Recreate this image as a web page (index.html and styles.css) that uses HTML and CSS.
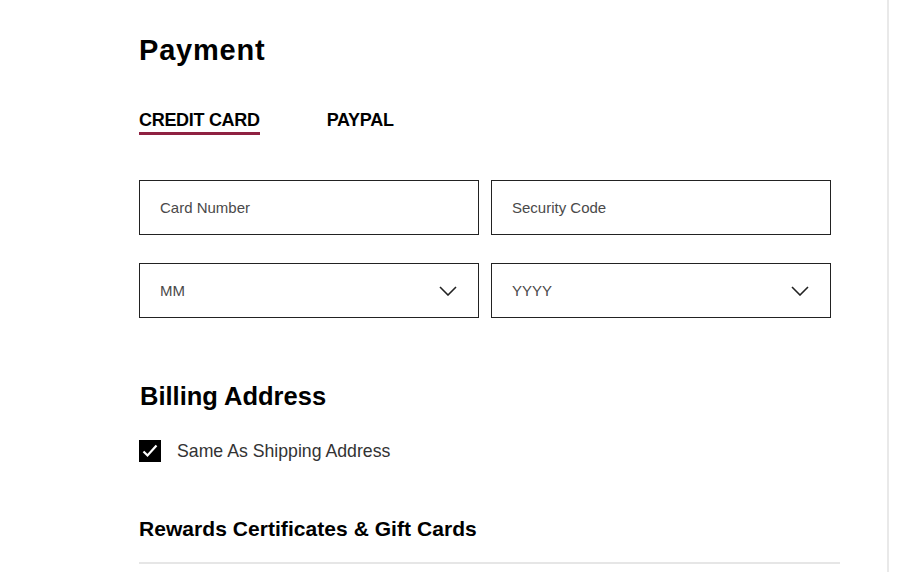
FILE: index.html
```html
<!DOCTYPE html>
<html lang="en">
<head>
<meta charset="UTF-8" />
<meta name="viewport" content="width=device-width, initial-scale=1.0" />
<title>Payment</title>
<link rel="stylesheet" href="styles.css">
</head>
<body>
<div class="page">
  <div class="checkout">
    <h1 class="title">Payment</h1>

    <div class="tabs">
      <div class="tab active">CREDIT CARD</div>
      <div class="tab">PAYPAL</div>
    </div>

    <div class="fields">
      <input class="field" type="text" placeholder="Card Number" />
      <input class="field" type="text" placeholder="Security Code" />
      <div class="field select">
        <span>MM</span>
        <svg width="18" height="10" viewBox="0 0 18 10"><path d="M1 1 L9 9 L17 1" fill="none" stroke="#222" stroke-width="1.6"/></svg>
      </div>
      <div class="field select">
        <span>YYYY</span>
        <svg width="18" height="10" viewBox="0 0 18 10"><path d="M1 1 L9 9 L17 1" fill="none" stroke="#222" stroke-width="1.6"/></svg>
      </div>
    </div>

    <h2 class="subtitle">Billing Address</h2>

    <label class="check">
      <span class="box">
        <svg width="22" height="22" viewBox="0 0 22 22"><path d="M4.5 11.5 L8.5 15.5 L17.5 5.5" fill="none" stroke="#fff" stroke-width="2.2"/></svg>
      </span>
      Same As Shipping Address
    </label>

    <h3 class="rewards">Rewards Certificates &amp; Gift Cards</h3>
    <div class="divider"></div>
  </div>
</div>
</body>
</html>
```

FILE: styles.css
```css
body {
margin: 0;
background: #fff;
font-family: "Liberation Sans", Arial, sans-serif;
color: #000;
}

.page {
width: 887px;
min-height: 572px;
border-right: 2px solid #e9e9e9;
}

.checkout {
padding: 34px 0 0 139px;
width: 701px;
}

.title {
margin: 0;
font-size: 29px;
line-height: 32px;
font-weight: bold;
letter-spacing: 0.8px;
}

.tabs {
display: flex;
gap: 67px;
margin-top: 44px;
}

.tab {
font-size: 18px;
line-height: 20px;
font-weight: bold;
letter-spacing: -0.3px;
padding-bottom: 2px;
border-bottom: 3px solid transparent;
}

.tab.active {
border-bottom-color: #8f2141;
}

.fields {
display: grid;
grid-template-columns: 340px 340px;
column-gap: 12px;
row-gap: 28px;
margin-top: 45px;
}

.field {
box-sizing: border-box;
height: 55px;
border: 1px solid #222;
border-radius: 0;
padding: 0 0 0 20px;
font-family: "Liberation Sans", Arial, sans-serif;
font-size: 15px;
color: #4a4a4a;
background: #fff;
outline: none;
}

.field::placeholder {
color: #4a4a4a;
}

.select {
display: flex;
align-items: center;
justify-content: space-between;
padding-right: 21px;
}

.subtitle {
margin: 63px 0 0 1px;
font-size: 25.5px;
line-height: 30px;
font-weight: bold;
}

.check {
display: flex;
align-items: center;
gap: 16px;
margin-top: 29px;
font-size: 17.7px;
color: #333;
}

.box {
width: 22px;
height: 22px;
background: #000;
display: flex;
}

.rewards {
margin: 55px 0 0 0;
font-size: 21px;
line-height: 24px;
font-weight: bold;
letter-spacing: 0.05px;
}

.divider {
height: 2px;
background: #e6e6e6;
margin-top: 21px;
}
```
